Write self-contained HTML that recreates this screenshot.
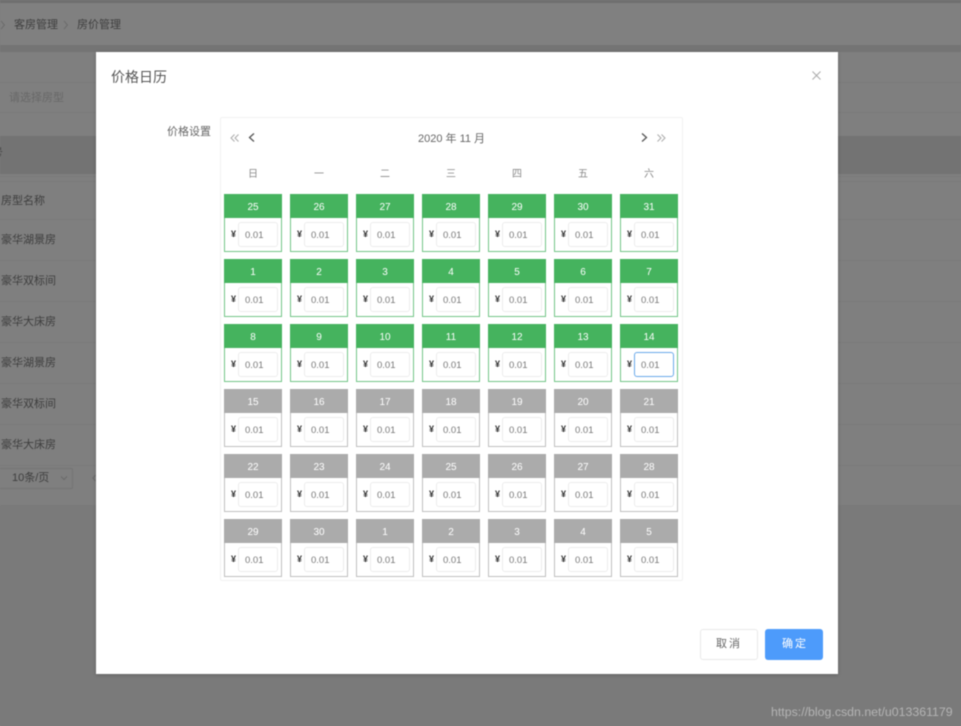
<!DOCTYPE html>
<html lang="zh">
<head>
<meta charset="utf-8">
<style>
html,body{margin:0;padding:0;width:961px;height:726px;overflow:hidden;background:#7f7f7f;font-family:"Liberation Sans","Noto Sans CJK SC",sans-serif;}
.a{position:absolute;white-space:nowrap;}
#root{position:relative;width:961px;height:726px;overflow:hidden;filter:blur(.45px);}
.line{position:absolute;left:0;width:961px;height:1px;background:#7a7a7a;}
.t{font-size:11px;line-height:14px;color:#3e3e3e;}
.cal{position:absolute;left:224px;top:194px;display:grid;grid-template-columns:repeat(7,58px);column-gap:8px;row-gap:7px;}
.c{position:relative;box-sizing:border-box;width:58px;height:58px;border:1px solid #72c587;background:#fff;}
.c b{display:block;margin:-1px -1px 0;height:24px;line-height:27px;overflow:hidden;text-align:center;background:#45b35e;color:#fff;font-size:10px;font-weight:normal;}
.c i{position:absolute;left:6px;top:33px;font-style:normal;font-weight:bold;font-size:9px;line-height:12px;color:#333;}
.c span{position:absolute;left:13px;top:27px;box-sizing:border-box;width:40px;height:25px;border:1px solid #ececec;border-radius:3px;font-size:9.500px;line-height:25px;padding-left:6px;color:#777;background:#fff;}
.g{border-color:#bfbfbf;}
.g b{background:#ababab;}
.f{border-color:#6aa9ea !important;}
.w{top:169px;font-size:10px;line-height:12px;color:#888;width:20px;text-align:center;}
</style>
</head>
<body>
<div id="root">
<!-- background page -->
<div class="a" style="left:0;top:0;width:961px;height:3px;background:#6f6f6f"></div>
<div class="a" style="left:0;top:3px;width:961px;height:42px;background:#808080"></div>
<div class="a" style="left:0;top:45px;width:961px;height:7px;background:#747474"></div>
<div class="a t" style="left:14px;top:18px">客房管理</div>
<div class="a t" style="left:77px;top:18px">房价管理</div>
<svg class="a" style="left:0;top:20px" width="6" height="10" viewBox="0 0 6 10"><path d="M1 1 4.500 5 1 9" fill="none" stroke="#6c6c6c"/></svg>
<svg class="a" style="left:63px;top:20px" width="6" height="10" viewBox="0 0 6 10"><path d="M1 1 4.500 5 1 9" fill="none" stroke="#6c6c6c"/></svg>
<div class="line" style="top:82px"></div>
<div class="line" style="top:112px"></div>
<div class="a t" style="left:9px;top:91px;color:#686868">请选择房型</div>
<div class="a" style="left:0;top:136px;width:961px;height:38px;background:#737373"></div>
<div class="a t" style="left:-19px;top:146px">房号</div>
<div class="line" style="top:176px"></div>
<div class="line" style="top:181px"></div>
<div class="a t" style="left:1px;top:194px">房型名称</div>
<div class="line" style="top:219px"></div>
<div class="a t" style="left:1px;top:233px">豪华湖景房</div>
<div class="line" style="top:260px"></div>
<div class="a t" style="left:1px;top:274px">豪华双标间</div>
<div class="line" style="top:301px"></div>
<div class="a t" style="left:1px;top:315px">豪华大床房</div>
<div class="line" style="top:342px"></div>
<div class="a t" style="left:1px;top:356px">豪华湖景房</div>
<div class="line" style="top:383px"></div>
<div class="a t" style="left:1px;top:397px">豪华双标间</div>
<div class="line" style="top:424px"></div>
<div class="a t" style="left:1px;top:438px">豪华大床房</div>
<div class="line" style="top:465px"></div>
<div class="a" style="left:-5px;top:468px;box-sizing:border-box;width:78px;height:21px;border:1px solid #747474;border-radius:2px"></div>
<div class="a t" style="left:12px;top:471px">10条/页</div>
<svg class="a" style="left:60px;top:475px" width="8" height="6" viewBox="0 0 8 6"><path d="M1 1.500 4 4.500 7 1.500" fill="none" stroke="#6a6a6a"/></svg>
<svg class="a" style="left:92px;top:474px" width="4" height="8" viewBox="0 0 4 8"><path d="M3.500 1 1 4 3.500 7" fill="none" stroke="#6a6a6a"/></svg>
<div class="a" style="left:0;top:505px;width:961px;height:221px;background:#7a7a7a"></div>

<!-- modal -->
<div class="a" style="left:96px;top:52px;width:742px;height:622px;background:#fff;box-shadow:0 1px 4px rgba(0,0,0,.2)"></div>
<div class="a" style="left:111px;top:67px;font-size:14px;line-height:20px;color:#555">价格日历</div>
<svg class="a" style="left:811px;top:70px" width="11" height="11" viewBox="0 0 11 11"><path d="M1.500 1.500 9.500 9.500M9.500 1.500 1.500 9.500" fill="none" stroke="#aaa" stroke-width="1"/></svg>
<div class="a" style="left:167px;top:125px;font-size:11px;line-height:15px;color:#666">价格设置</div>

<!-- calendar -->
<div class="a" style="left:220px;top:117px;box-sizing:border-box;width:463px;height:464px;border:1px solid #f2f2f2;border-radius:2px"></div>
<svg class="a" style="left:230px;top:133px" width="10" height="10" viewBox="0 0 10 10"><path d="M4.500 1.500 1 5 4.500 8.500M8.500 1.500 5 5 8.500 8.500" fill="none" stroke="#aaa" stroke-width="1"/></svg>
<svg class="a" style="left:247px;top:132px" width="10" height="11" viewBox="0 0 10 11"><path d="M7 1.500 2.500 5.500 7 9.500" fill="none" stroke="#555" stroke-width="1.300"/></svg>
<svg class="a" style="left:639px;top:132px" width="10" height="11" viewBox="0 0 10 11"><path d="M3 1.500 7.500 5.500 3 9.500" fill="none" stroke="#555" stroke-width="1.300"/></svg>
<svg class="a" style="left:656px;top:133px" width="10" height="10" viewBox="0 0 10 10"><path d="M1.500 1.500 5 5 1.500 8.500M5.500 1.500 9 5 5.500 8.500" fill="none" stroke="#aaa" stroke-width="1"/></svg>
<div class="a" style="left:418px;top:132px;font-size:11px;line-height:15px;color:#666">2020 年 11 月</div>
<div class="a w" style="left:243px">日</div>
<div class="a w" style="left:309px">一</div>
<div class="a w" style="left:375px">二</div>
<div class="a w" style="left:441px">三</div>
<div class="a w" style="left:507px">四</div>
<div class="a w" style="left:573px">五</div>
<div class="a w" style="left:639px">六</div>

<div class="cal">
<div class="c"><b>25</b><i>¥</i><span>0.01</span></div>
<div class="c"><b>26</b><i>¥</i><span>0.01</span></div>
<div class="c"><b>27</b><i>¥</i><span>0.01</span></div>
<div class="c"><b>28</b><i>¥</i><span>0.01</span></div>
<div class="c"><b>29</b><i>¥</i><span>0.01</span></div>
<div class="c"><b>30</b><i>¥</i><span>0.01</span></div>
<div class="c"><b>31</b><i>¥</i><span>0.01</span></div>
<div class="c"><b>1</b><i>¥</i><span>0.01</span></div>
<div class="c"><b>2</b><i>¥</i><span>0.01</span></div>
<div class="c"><b>3</b><i>¥</i><span>0.01</span></div>
<div class="c"><b>4</b><i>¥</i><span>0.01</span></div>
<div class="c"><b>5</b><i>¥</i><span>0.01</span></div>
<div class="c"><b>6</b><i>¥</i><span>0.01</span></div>
<div class="c"><b>7</b><i>¥</i><span>0.01</span></div>
<div class="c"><b>8</b><i>¥</i><span>0.01</span></div>
<div class="c"><b>9</b><i>¥</i><span>0.01</span></div>
<div class="c"><b>10</b><i>¥</i><span>0.01</span></div>
<div class="c"><b>11</b><i>¥</i><span>0.01</span></div>
<div class="c"><b>12</b><i>¥</i><span>0.01</span></div>
<div class="c"><b>13</b><i>¥</i><span>0.01</span></div>
<div class="c"><b>14</b><i>¥</i><span class="f">0.01</span></div>
<div class="c g"><b>15</b><i>¥</i><span>0.01</span></div>
<div class="c g"><b>16</b><i>¥</i><span>0.01</span></div>
<div class="c g"><b>17</b><i>¥</i><span>0.01</span></div>
<div class="c g"><b>18</b><i>¥</i><span>0.01</span></div>
<div class="c g"><b>19</b><i>¥</i><span>0.01</span></div>
<div class="c g"><b>20</b><i>¥</i><span>0.01</span></div>
<div class="c g"><b>21</b><i>¥</i><span>0.01</span></div>
<div class="c g"><b>22</b><i>¥</i><span>0.01</span></div>
<div class="c g"><b>23</b><i>¥</i><span>0.01</span></div>
<div class="c g"><b>24</b><i>¥</i><span>0.01</span></div>
<div class="c g"><b>25</b><i>¥</i><span>0.01</span></div>
<div class="c g"><b>26</b><i>¥</i><span>0.01</span></div>
<div class="c g"><b>27</b><i>¥</i><span>0.01</span></div>
<div class="c g"><b>28</b><i>¥</i><span>0.01</span></div>
<div class="c g"><b>29</b><i>¥</i><span>0.01</span></div>
<div class="c g"><b>30</b><i>¥</i><span>0.01</span></div>
<div class="c g"><b>1</b><i>¥</i><span>0.01</span></div>
<div class="c g"><b>2</b><i>¥</i><span>0.01</span></div>
<div class="c g"><b>3</b><i>¥</i><span>0.01</span></div>
<div class="c g"><b>4</b><i>¥</i><span>0.01</span></div>
<div class="c g"><b>5</b><i>¥</i><span>0.01</span></div>
</div>

<!-- footer buttons -->
<div class="a" style="left:700px;top:629px;box-sizing:border-box;width:58px;height:31px;border:1px solid #e9e9e9;border-radius:3px;background:#fff;text-align:center;font-size:11px;line-height:29px;letter-spacing:2px;color:#666">取消</div>
<div class="a" style="left:765px;top:629px;box-sizing:border-box;width:58px;height:31px;border-radius:3px;background:#4d9bfb;text-align:center;font-size:11px;line-height:31px;letter-spacing:2px;padding-left:2px;color:#fff">确定</div>

<div class="a" style="left:771px;top:704px;font-size:12.350px;line-height:16px;color:#b4b4b4">https://blog.csdn.net/u013361179</div>
</div>
</body>
</html>
